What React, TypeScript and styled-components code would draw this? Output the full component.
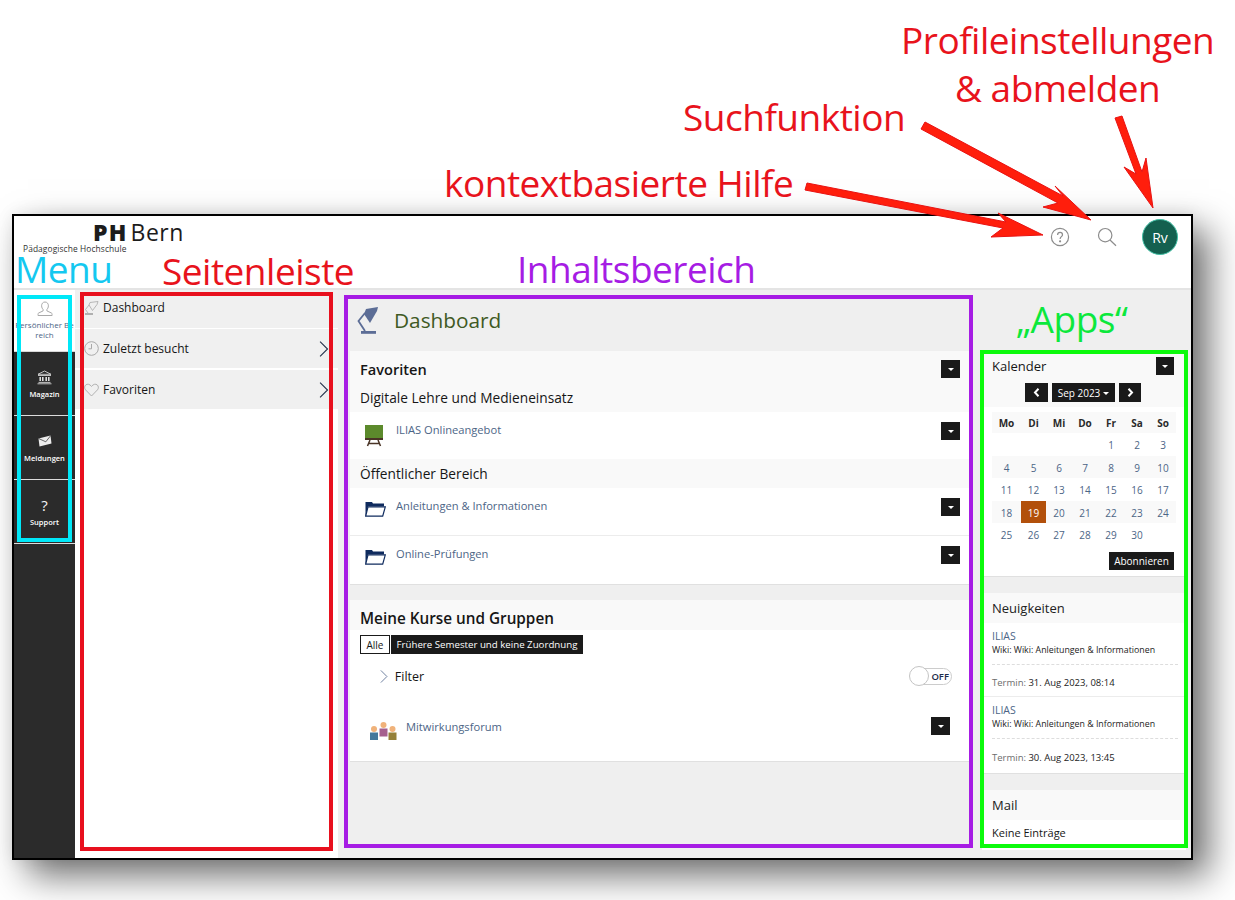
import React from "react";
import styled, { createGlobalStyle } from "styled-components";

const Global = createGlobalStyle`
  html, body { margin: 0; padding: 0; background: #fff; }
  body { font-family: "Open Sans", "Noto Sans", sans-serif; color: #161616; }
  * { box-sizing: border-box; }
`;

const Page = styled.div`
  position: relative; width: 1235px; height: 900px; padding: 214px 0 0 12px; overflow: hidden; background: #fff;
`;
const Window = styled.div`
  width: 1181px; height: 646px; border: 2px solid #000; background: #fff; display: flex; flex-direction: column;
  box-shadow: 16px 16px 34px rgba(0,0,0,.56), 0 0 16px rgba(0,0,0,.08);
`;
const Header = styled.header`
  height: 74px; flex: none; display: flex; align-items: flex-start; justify-content: space-between;
  padding: 0 13px 0 9px; border-bottom: 2px solid #e4e4e4;
`;
const Logo = styled.div`display: flex; flex-direction: column; align-items: flex-start; width: 120px;`;
const LogoMark = styled.div`
  margin: 1px 0 0 70px; white-space: nowrap; font-size: 23px; line-height: 30px; letter-spacing: .5px; color: #1c1c1c;
  b { font-weight: 800; letter-spacing: 1.2px; margin-right: 3px; }
`;
const LogoSub = styled.div`font-size: 8.4px; line-height: 10px; margin-top: -3px; color: #333; white-space: nowrap; letter-spacing: .1px;`;
const HeaderIcons = styled.div`display: flex; align-items: center; margin-top: 3px; height: 36px;`;
const IconSlot = styled.div<{ $ml?: number }>`width: 20px; margin-left: ${p => p.$ml ?? 0}px; display: flex; justify-content: center;`;
const Avatar = styled.div`
  width: 36px; height: 36px; border-radius: 50%; background: #14604f; border: 1px solid #43c0a6;
  color: #fff; display: flex; align-items: center; justify-content: center; font-size: 14px; margin-left: 25px;
`;

const Body = styled.div`flex: 1; display: flex; min-height: 0;`;
const Nav = styled.nav`width: 61px; flex: none; background: #2b2b2b;`;
const NavItem = styled.div<{ $active?: boolean; $h: number }>`
  height: ${p => p.$h}px; display: flex; flex-direction: column; align-items: center; justify-content: flex-start;
  padding-top: 9px;
  background: ${p => (p.$active ? "#fff" : "#2b2b2b")};
  border-bottom: 1px solid ${p => (p.$active ? "#d8d8d8" : "#dcdcdc")};
  color: ${p => (p.$active ? "#4c6586" : "#fff")};
  font-size: ${p => (p.$active ? 8 : 7.5)}px; font-weight: ${p => (p.$active ? 400 : 600)}; line-height: 10px; text-align: center; white-space: nowrap;
`;
const NavIcon = styled.div`height: 18px; margin-top: 7px; margin-bottom: 3px; display: flex; align-items: center;`;
const NavIconTop = styled.div`height: 20px; margin-bottom: 1px; display: flex; align-items: center;`;
const QMark = styled.span`font-size: 15px; line-height: 18px; font-weight: 400; color: #f4f4f4;`;

const Side = styled.aside`width: 263px; flex: none; background: #fff; display: flex; flex-direction: column;`;
const SideRow = styled.div<{ $h: number; $gap: number; $lift?: number }>`
  height: ${p => p.$h}px; margin-bottom: ${p => p.$gap}px; background: #f0f0f0; display: flex; align-items: center;
  padding: 0 9px ${p => p.$lift ?? 0}px; font-size: 12px; color: #161616; gap: 4px;
`;
const SideIcon = styled.div`width: 15px; height: 16px; display: flex; align-items: center; justify-content: center;`;
const Chevron = styled.div`margin-left: auto; display: flex;`;

const Main = styled.main`flex: 1; background: #efefef; display: flex; padding-left: 12px; gap: 12px; overflow: hidden; min-width: 0;`;
const Center = styled.div`width: 620px; flex: none; display: flex; flex-direction: column;`;
const PageTitle = styled.div`height: 61px; display: flex; align-items: center; padding: 0 0 2px 7px; gap: 15px; font-size: 20.8px; color: #3f5a24;`;
const Panel = styled.section<{ $mb?: number }>`background: #fff; border-bottom: 1px solid #e0e0e0; margin-bottom: ${p => p.$mb ?? 0}px;`;
const PanelHead = styled.div<{ $h: number }>`background: #f9f9f9; padding: 0 10px; height: ${p => p.$h}px;`;
const HeadRow = styled.div<{ $h: number; $size: number }>`
  display: flex; align-items: center; justify-content: space-between; height: ${p => p.$h}px; font-size: ${p => p.$size}px; font-weight: 600; color: #161616;
`;
const HeadLine = styled.div`font-size: 13.7px; line-height: 20px; margin-top: 1px; color: #161616;`;
const SubHead = styled.div<{ $h: number }>`background: #f9f9f9; height: ${p => p.$h}px; display: flex; align-items: center; padding: 0 10px; font-size: 13.7px; color: #161616;`;
const Drop = styled.button<{ $w?: number }>`
  width: ${p => p.$w ?? 19}px; height: 18px; flex: none; background: #1a1a1a; border: 0; padding: 0; display: flex; align-items: center; justify-content: center;
  &::after { content: ""; border: 3px solid transparent; border-top: 3px solid #fff; border-bottom: 0; }
`;
const Item = styled.div<{ $h: number; $line?: boolean }>`
  height: ${p => p.$h}px; background: #fff; display: flex; align-items: flex-start; padding: 10px 10px 0 15px;
  border-bottom: ${p => (p.$line ? "1px solid #ececec" : "0")};
`;
const ItemIcon = styled.div<{ $w: number }>`width: ${p => p.$w}px; height: 22px; margin-top: 3px; flex: none; display: flex; align-items: flex-start;`;
const ItemLink = styled.div`font-size: 11.15px; line-height: 16px; color: #4c6586; flex: 1;`;
const ModeBar = styled.div`display: flex; padding: 5px 10px 0; gap: 1px;`;
const ModeOn = styled.div`height: 19px; width: 30px; border: 1px solid #1a1a1a; display: flex; align-items: center; justify-content: center; font-size: 10px; color: #161616;`;
const ModeOff = styled.div`height: 19px; width: 192px; background: #1a1a1a; color: #fff; display: flex; align-items: center; justify-content: center; font-size: 9.7px; white-space: nowrap;`;
const FilterRow = styled.div`display: flex; align-items: center; height: 22px; margin-top: 11px; padding: 0 18px 0 30px; gap: 7px; font-size: 12.5px;`;
const FilterLabel = styled.span`flex: 1;`;
const Toggle = styled.div`width: 43px; height: 20px; position: relative; display: flex; justify-content: flex-end;`;
const ToggleTrack = styled.div`margin-top: 2px; width: 40px; height: 17px; border: 1px solid #ccc; border-radius: 9px; font-size: 9.5px; font-weight: 600; line-height: 15px; text-align: right; padding-right: 2px; color: #1c2b4a;`;
const ToggleKnob = styled.div`position: absolute; left: 0; top: 0; width: 20px; height: 20px; border-radius: 50%; border: 1px solid #c4c4c4; background: #fff;`;
const ForumRow = styled.div`display: flex; align-items: flex-start; padding: 32px 20px 0 20px; height: 74px;`;
const DropWrap = styled.div`margin-top: -2px; flex: none; display: flex;`;

const Right = styled.div`width: 204px; flex: none; padding-top: 61px; display: flex; flex-direction: column;`;
const CalHead = styled.div`background: #f9f9f9; height: 56px; padding: 5px 12px 0 10px;`;
const CalTitleRow = styled.div`display: flex; justify-content: space-between; align-items: center; height: 20px; font-size: 13px; color: #161616;`;
const CalNav = styled.div`display: flex; justify-content: center; gap: 4px; margin: 7px 0 0 0;`;
const CalBtn = styled.div<{ $w: number }>`width: ${p => p.$w}px; height: 19px; background: #1a1a1a; color: #fff; display: flex; align-items: center; justify-content: center; font-size: 10px; white-space: nowrap; gap: 3px;
  i { border: 3px solid transparent; border-top: 3px solid #fff; border-bottom: 0; margin-top: 1px; }`;
const CalGrid = styled.div`display: grid; grid-template-columns: 29px 25px repeat(5, 26px); margin: 5px 0 0 10px; width: 184px;`;
const CalCell = styled.div<{ $h: number; $shade?: boolean; $head?: boolean; $today?: boolean }>`
  height: ${p => p.$h}px; display: flex; align-items: center; justify-content: center; font-size: 10px;
  padding-top: ${p => (p.$head ? 0 : 1)}px;
  font-weight: ${p => (p.$head ? 700 : 400)};
  background: ${p => (p.$today ? "#b2500b" : p.$shade || p.$head ? "#f9f9f9" : "#fff")};
  color: ${p => (p.$today ? "#fff" : p.$head ? "#2a2a2a" : "#4c6586")};
`;
const CalFoot = styled.div`display: flex; justify-content: flex-end; padding: 7px 12px 6px 0;`;
const Abo = styled.div`width: 65px; height: 18px; background: #1a1a1a; color: #fff; font-size: 10px; display: flex; align-items: center; justify-content: center;`;
const BoxHead = styled.div<{ $h: number }>`background: #f9f9f9; height: ${p => p.$h}px; display: flex; align-items: center; padding: 0 10px; font-size: 13px; color: #222;`;
const News = styled.div<{ $h: number; $line?: boolean }>`height: ${p => p.$h}px; padding: 7px 8px 0 10px; border-bottom: ${p => (p.$line ? "1px solid #ececec" : "0")};`;
const NewsTitle = styled.div`font-size: 10.5px; line-height: 13px; color: #4c6586;`;
const NewsText = styled.div`font-size: 8.8px; line-height: 14px; color: #222; white-space: nowrap; padding-bottom: 7px; border-bottom: 1px dashed #ddd;`;
const NewsDate = styled.div<{ $mt: number }>`font-size: 9.5px; line-height: 13px; margin-top: ${p => p.$mt}px; color: #222; span { color: #6c6c6c; }`;
const Empty = styled.div`font-size: 11px; background: #fff; height: 30px; padding: 5px 10px 0;`;

const Overlay = styled.svg`position: absolute; left: 0; top: 0; pointer-events: none;`;
const Frame = styled.div<{ $x: number; $y: number; $w: number; $h: number; $c: string }>`
  position: absolute; left: ${p => p.$x}px; top: ${p => p.$y}px; width: ${p => p.$w}px; height: ${p => p.$h}px;
  border: 4px solid ${p => p.$c}; pointer-events: none;
`;
const Note = styled.div<{ $x: number; $y: number; $c: string }>`
  position: absolute; left: ${p => p.$x}px; top: ${p => p.$y}px; color: ${p => p.$c}; font-size: 37px;
  line-height: 30px; white-space: nowrap; letter-spacing: -.5px; font-weight: 400;
`;

const IconHelp = () => (
  <svg width="20" height="20" viewBox="0 0 20 20" fill="none" stroke="#8c8c8c" strokeWidth="1.2">
    <circle cx="10" cy="10" r="8.6" />
    <path d="M7.6 8c0-1.6 1.1-2.6 2.5-2.6S12.500 6.400 12.500 7.900c0 1.700-2.400 1.900-2.400 4" />
    <circle cx="10.100" cy="14.300" r=".5" fill="#8c8c8c" />
  </svg>
);
const IconSearch = () => (
  <svg width="20" height="20" viewBox="0 0 20 20" fill="none" stroke="#8c8c8c" strokeWidth="1.2">
    <circle cx="8.200" cy="8.200" r="6.700" />
    <path d="M13 13l6 5.800" />
  </svg>
);
const IconUser = ({ c = "#a9a9a9" }: { c?: string }) => (
  <svg width="16" height="16" viewBox="0 0 16 16" fill="none" stroke={c} strokeWidth="1">
    <path d="M8 1c2.200 0 3.400 1.700 3.400 3.800 0 1.600-.8 3-1.500 3.700v1.400l4.600 2.100c.5.300.6.800.6 2.500H1c0-1.700.1-2.200.6-2.500l4.500-2.100V8.500C5.400 7.800 4.600 6.400 4.600 4.800 4.600 2.700 5.800 1 8 1z" />
  </svg>
);
const IconBank = () => (
  <svg width="15" height="15" viewBox="0 0 15 15" fill="none" stroke="#e8e8e8" strokeWidth=".8">
    <path d="M7.500 1L1 4.300h13z" />
    <path d="M1 5.500h13M.5 13.800h14M1.500 12.400h12" />
    <path d="M3.200 7v4M5.800 7v4M9.200 7v4M11.800 7v4" strokeWidth="1.500" />
  </svg>
);
const IconMail = () => (
  <svg width="14" height="12" viewBox="0 0 14 12">
    <path d="M.5 3.500L12.500 .5 13.500 8.500 1.500 11.500z" fill="#ececec" />
    <path d="M.8 3.600L7.800 6.800 12.500 .8" fill="none" stroke="#2b2b2b" strokeWidth=".7" />
  </svg>
);
const IconLampSmall = () => (
  <svg width="15" height="16" viewBox="0 0 15 16" fill="none" stroke="#b0b0b0" strokeWidth=".9">
    <path d="M6 2.500L14 1.500 13 4.500 8.500 10.500 5 5zM5 5L1.500 9.500 4 13" />
    <path d="M1 14h8" strokeWidth="2" />
  </svg>
);
const IconClock = () => (
  <svg width="15" height="15" viewBox="0 0 15 15" fill="none" stroke="#a9a9a9" strokeWidth="1">
    <circle cx="7.500" cy="7.500" r="6.800" />
    <path d="M7.500 3v4.800H4.500" />
  </svg>
);
const IconHeart = () => (
  <svg width="15" height="14" viewBox="0 0 15 14" fill="none" stroke="#a9a9a9" strokeWidth=".9">
    <path d="M7.500 13L1.500 6.800C.2 5.300.4 3 1.800 1.900 3.400.7 5.600 1 7.500 3.400 9.400 1 11.600.7 13.200 1.900c1.400 1.100 1.600 3.400.3 4.900z" />
  </svg>
);
const IconChevron = ({ h = 16, c = "#22304a" }: { h?: number; c?: string }) => (
  <svg width={h * 0.6} height={h} viewBox="0 0 9 15" fill="none" stroke={c} strokeWidth="1">
    <path d="M1 .5l7 7-7 7" />
  </svg>
);
const IconLamp = () => (
  <svg width="22" height="28" viewBox="0 0 22 28">
    <path d="M9 3L21 1 20 5 13 17 7 8z" fill="#5c6d96" />
    <path d="M8 7L1.500 15 8 25" fill="none" stroke="#5c6d96" strokeWidth="1.800" />
    <rect x="4" y="25" width="15" height="2.800" fill="#5c6d96" />
  </svg>
);
const IconBoard = () => (
  <svg width="18" height="22" viewBox="0 0 18 22">
    <rect x="0" y="0" width="18" height="13" fill="#5c8a2c" />
    <rect x="0" y="13" width="18" height="2" fill="#4a3426" />
    <path d="M5 15L2.500 21M13 15l2.500 6M4 18.500h10" stroke="#4a3426" strokeWidth="1.500" fill="none" />
  </svg>
);
const IconFolder = () => (
  <svg width="21" height="16" viewBox="0 0 21 16">
    <path d="M.5 1H7l1 1.500h11v3H3L1 15H.5z" fill="#0f2b5e" />
    <path d="M.7 15.200h17L20.300 5.800H3z" fill="#fff" stroke="#0f2b5e" strokeWidth="1.200" />
  </svg>
);
const IconPeople = () => (
  <svg width="28" height="18" viewBox="0 0 28 18">
    <circle cx="4" cy="7" r="3" fill="#f0b27a" /><rect x="0" y="10.500" width="8" height="7.500" fill="#44789c" />
    <circle cx="13.500" cy="3" r="3" fill="#f0b27a" /><rect x="9.500" y="6.500" width="8" height="8" fill="#a55f8e" />
    <circle cx="22.500" cy="7" r="3" fill="#f0b27a" /><rect x="18.500" y="10.500" width="8" height="7.500" fill="#958038" />
  </svg>
);
const IconPrev = () => (
  <svg width="7" height="9" viewBox="0 0 7 9" fill="none" stroke="#fff" strokeWidth="2"><path d="M5.500 .8L2 4.500 5.500 8.200" /></svg>
);
const IconNext = () => (
  <svg width="7" height="9" viewBox="0 0 7 9" fill="none" stroke="#fff" strokeWidth="2"><path d="M1.500 .8L5 4.500 1.500 8.200" /></svg>
);

const days = ["Mo", "Di", "Mi", "Do", "Fr", "Sa", "So"];
const weeks: (number | null)[][] = [
  [null, null, null, null, 1, 2, 3],
  [4, 5, 6, 7, 8, 9, 10],
  [11, 12, 13, 14, 15, 16, 17],
  [18, 19, 20, 21, 22, 23, 24],
  [25, 26, 27, 28, 29, 30, null],
];
const weekH = [23, 22, 23, 22, 22];

export default function App() {
  return (
    <Page>
      <Global />
      <Window>
        <Header>
          <Logo>
            <LogoMark><b>PH</b>Bern</LogoMark>
            <LogoSub>Pädagogische Hochschule</LogoSub>
          </Logo>
          <HeaderIcons>
            <IconSlot><IconHelp /></IconSlot>
            <IconSlot $ml={27}><IconSearch /></IconSlot>
            <Avatar>Rv</Avatar>
          </HeaderIcons>
        </Header>
        <Body>
          <Nav>
            <NavItem $active $h={62}>
              <NavIconTop><IconUser /></NavIconTop>
              <span>Persönlicher Be<br />reich</span>
            </NavItem>
            <NavItem $h={64}><NavIcon><IconBank /></NavIcon>Magazin</NavItem>
            <NavItem $h={64}><NavIcon><IconMail /></NavIcon>Meldungen</NavItem>
            <NavItem $h={64}><NavIcon><QMark>?</QMark></NavIcon>Support</NavItem>
          </Nav>
          <Side>
            <SideRow $h={38} $gap={1} $lift={3}><SideIcon><IconLampSmall /></SideIcon>Dashboard</SideRow>
            <SideRow $h={39} $gap={2}><SideIcon><IconClock /></SideIcon>Zuletzt besucht<Chevron><IconChevron /></Chevron></SideRow>
            <SideRow $h={39} $gap={0}><SideIcon><IconHeart /></SideIcon>Favoriten<Chevron><IconChevron /></Chevron></SideRow>
          </Side>
          <Main>
            <Center>
              <PageTitle><IconLamp />Dashboard</PageTitle>
              <Panel $mb={15}>
                <PanelHead $h={61}>
                  <HeadRow $h={36} $size={14.6}>Favoriten<Drop /></HeadRow>
                  <HeadLine>Digitale Lehre und Medieneinsatz</HeadLine>
                </PanelHead>
                <Item $h={47}><ItemIcon $w={31}><IconBoard /></ItemIcon><ItemLink>ILIAS Onlineangebot</ItemLink><Drop /></Item>
                <SubHead $h={29}>Öffentlicher Bereich</SubHead>
                <Item $h={48} $line><ItemIcon $w={31}><IconFolder /></ItemIcon><ItemLink>Anleitungen &amp; Informationen</ItemLink><Drop /></Item>
                <Item $h={48}><ItemIcon $w={31}><IconFolder /></ItemIcon><ItemLink>Online-Prüfungen</ItemLink><Drop /></Item>
              </Panel>
              <Panel>
                <PanelHead $h={30}><HeadRow $h={35} $size={15.3}>Meine Kurse und Gruppen</HeadRow></PanelHead>
                <ModeBar><ModeOn>Alle</ModeOn><ModeOff>Frühere Semester und keine Zuordnung</ModeOff></ModeBar>
                <FilterRow>
                  <IconChevron h={13} c="#5a6f93" />
                  <FilterLabel>Filter</FilterLabel>
                  <Toggle><ToggleTrack>OFF</ToggleTrack><ToggleKnob /></Toggle>
                </FilterRow>
                <ForumRow>
                  <ItemIcon $w={36}><IconPeople /></ItemIcon>
                  <ItemLink>Mitwirkungsforum</ItemLink>
                  <DropWrap><Drop /></DropWrap>
                </ForumRow>
              </Panel>
            </Center>
            <Right>
              <Panel $mb={16}>
                <CalHead>
                  <CalTitleRow>Kalender<Drop $w={18} /></CalTitleRow>
                  <CalNav>
                    <CalBtn $w={23}><IconPrev /></CalBtn>
                    <CalBtn $w={63}>Sep 2023<i /></CalBtn>
                    <CalBtn $w={22}><IconNext /></CalBtn>
                  </CalNav>
                </CalHead>
                <CalGrid>
                  {days.map(d => <CalCell key={d} $h={21} $head>{d}</CalCell>)}
                  {weeks.map((w, i) =>
                    w.map((n, j) => (
                      <CalCell key={`${i}-${j}`} $h={weekH[i]} $shade={i % 2 === 1} $today={n === 19}>{n}</CalCell>
                    ))
                  )}
                </CalGrid>
                <CalFoot><Abo>Abonnieren</Abo></CalFoot>
              </Panel>
              <Panel $mb={16}>
                <BoxHead $h={30}>Neuigkeiten</BoxHead>
                <News $h={74} $line>
                  <NewsTitle>ILIAS</NewsTitle>
                  <NewsText>Wiki: Wiki: Anleitungen &amp; Informationen</NewsText>
                  <NewsDate $mt={11}><span>Termin:</span> 31. Aug 2023, 08:14</NewsDate>
                </News>
                <News $h={76}>
                  <NewsTitle>ILIAS</NewsTitle>
                  <NewsText>Wiki: Wiki: Anleitungen &amp; Informationen</NewsText>
                  <NewsDate $mt={12}><span>Termin:</span> 30. Aug 2023, 13:45</NewsDate>
                </News>
              </Panel>
              <BoxHead $h={30}>Mail</BoxHead>
              <Empty>Keine Einträge</Empty>
            </Right>
          </Main>
        </Body>
      </Window>

      <Frame $x={17} $y={295} $w={55} $h={247} $c="#00e8f8" />
      <Frame $x={80} $y={292} $w={253} $h={559} $c="#e8101e" />
      <Frame $x={344} $y={295} $w={629} $h={553} $c="#a61ce4" />
      <Frame $x={980} $y={350} $w={208} $h={498} $c="#0cfa0c" />

      <Note $x={901} $y={25} $c="#e8131c">Profileinstellungen</Note>
      <Note $x={955} $y={73} $c="#e8131c">&amp; abmelden</Note>
      <Note $x={683} $y={102} $c="#e8131c">Suchfunktion</Note>
      <Note $x={444} $y={168} $c="#e8131c">kontextbasierte Hilfe</Note>
      <Note $x={15} $y={254} $c="#14c8f0">Menu</Note>
      <Note $x={162} $y={256} $c="#e8131c">Seitenleiste</Note>
      <Note $x={517} $y={254} $c="#a61ce4">Inhaltsbereich</Note>
      <Note $x={1016} $y={304} $c="#0ce83c">„Apps“</Note>

      <Overlay width="1235" height="900" viewBox="0 0 1235 900">
        <g fill="#ff1e0c" stroke="#e81212" strokeWidth="1">
          <polygon points="1115,118 1122,116 1142,172 1146,158 1153,208 1124,167 1136,174" />
          <polygon points="921,129 925,122 1063,196 1055,186 1091,220 1043,207 1058,203" />
          <polygon points="805,190 807,183 1006,222 998,213 1043,235 991,237 1003,228" />
        </g>
      </Overlay>
    </Page>
  );
}
